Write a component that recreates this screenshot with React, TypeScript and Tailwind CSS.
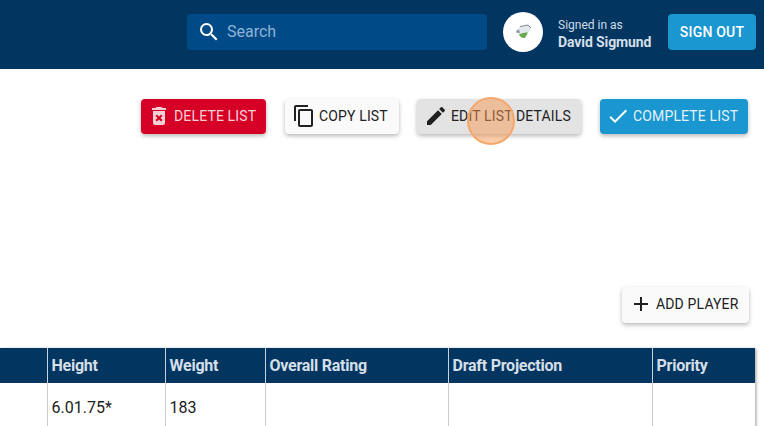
import React from 'react';
import { MdAdd, MdCheck, MdContentCopy, MdDeleteForever, MdEdit, MdSearch } from 'react-icons/md';

const headers = [
  { label: '', width: 'w-[47px]' },
  { label: 'Height', width: 'w-[118px]' },
  { label: 'Weight', width: 'w-[100px]' },
  { label: 'Overall Rating', width: 'w-[183px]' },
  { label: 'Draft Projection', width: 'w-[204px]' },
  { label: 'Priority', width: 'w-[103px]' },
];

const cells = ['', '6.01.75*', '183', '', '', ''];

const ActionButton: React.FC<{ className: string; icon: React.ReactNode; label: string }> = ({ className, icon, label }) => (
  <button className={`flex items-center rounded-[4px] pb-[2px] text-[14px] font-normal leading-none tracking-[0.15px] shadow-[0_2px_4px_rgba(0,0,0,0.28)] ${className}`}>
    {icon}
    <span>{label}</span>
  </button>
);

const App: React.FC = () => {
  return (
    <div className="relative h-[426px] w-[764px] overflow-hidden bg-white font-['Roboto',sans-serif] text-[#212121]">
      <header className="flex h-[69px] items-center bg-[#023660] pb-[5px] pl-[187px] pr-[8px]">
        <div className="flex h-[36px] w-[300px] items-center rounded-[4px] bg-[#004b87] pl-[10px]">
          <MdSearch className="h-[24px] w-[24px] text-white" />
          <span className="ml-[6px] pb-[1px] text-[16px] text-[#8fb2d6]">Search</span>
        </div>
        <div className="ml-[16px] flex h-[40px] w-[40px] items-center justify-center rounded-full bg-white">
          <svg width="17" height="16" viewBox="0 0 17 16">
            <path d="M1 9 4.500 2.500 13 1l3 3-2 4-9 3z" fill="#e3e8ec" />
            <path d="M5 2.500 13 1l3 3" fill="none" stroke="#7d8992" strokeWidth="1" />
            <path d="M1 8.500c0-2 1.500-3 3-3l1 3.500z" fill="#8a98a5" />
            <path d="M4 10.500c3-1.500 6-2 9-2L10 14c-3 .5-5-1-6-3.500z" fill="#6aa84f" />
          </svg>
        </div>
        <div className="ml-[15px] flex flex-col pt-[4px] text-[12px] leading-[17px]">
          <span className="text-[#cfdbe6]">Signed in as</span>
          <span className="text-[14px] font-bold leading-[17px] tracking-[-0.1px] text-[#d5dfe8]">David Sigmund</span>
        </div>
        <button className="ml-auto flex h-[36px] w-[88px] items-center justify-center rounded-[4px] bg-[#1a96d0] text-[14px] font-medium tracking-[0.2px] text-white">
          SIGN OUT
        </button>
      </header>

      <div className="flex justify-end pr-[16px] pt-[30px]">
        <ActionButton
          className="h-[35px] w-[125px] bg-[#d60026] pl-[6px] text-[#f6d0d6]"
          icon={<MdDeleteForever className="mr-[3px] h-[24px] w-[24px] text-[#f6d0d6]" />}
          label="DELETE LIST"
        />
        <ActionButton
          className="ml-[19px] h-[35px] w-[114px] bg-[#fafafa] pl-[7px]"
          icon={<MdContentCopy className="mr-[3px] h-[24px] w-[24px]" />}
          label="COPY LIST"
        />
        <ActionButton
          className="ml-[18px] h-[35px] w-[164px] bg-[#e3e3e3] pl-[7px]"
          icon={<MdEdit className="mr-[3px] h-[24px] w-[24px]" />}
          label="EDIT LIST DETAILS"
        />
        <ActionButton
          className="ml-[19px] h-[35px] w-[148px] bg-[#1a96d0] pl-[6px] text-[#e3f2fa]"
          icon={<MdCheck className="mr-[3px] h-[24px] w-[24px] text-white" />}
          label="COMPLETE LIST"
        />
      </div>

      <div className="flex justify-end pr-[15px] pt-[153px]">
        <ActionButton
          className="h-[36px] w-[127px] bg-[#fafafa] pl-[7px]"
          icon={<MdAdd className="mr-[3px] h-[24px] w-[24px]" />}
          label="ADD PLAYER"
        />
      </div>

      <table className="mt-[25px] w-[755px] table-fixed border-collapse shadow-[1px_1px_3px_rgba(0,0,0,0.4)]">
        <thead>
          <tr className="h-[35px] bg-[#023660]">
            {headers.map((h, i) => (
              <th
                key={i}
                className={`${h.width} border-r border-[#c9d3dc] pl-[4px] text-left text-[16px] font-bold tracking-[-0.25px] text-[#d5dfe8] last:border-r-0`}
              >
                {h.label}
              </th>
            ))}
          </tr>
        </thead>
        <tbody>
          <tr className="h-[48px]">
            {cells.map((c, i) => (
              <td key={i} className="border-r border-[#c9ccce] pl-[4px] pt-[1px] text-[16px] text-[#212121] last:border-r-0">
                {c}
              </td>
            ))}
          </tr>
        </tbody>
      </table>

      {/* click marker */}
      <div className="absolute left-[467px] top-[97px] h-[48px] w-[48px] rounded-full border-2 border-[#f5a76a] bg-[#f59a54]/50" />
    </div>
  );
};

export default App;
